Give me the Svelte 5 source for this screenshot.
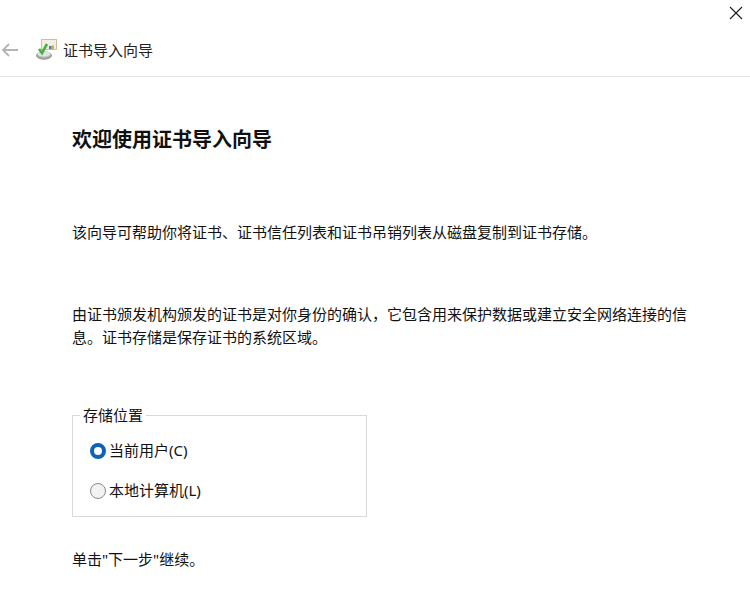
<script>
  // Wizard page copy
  const title = '证书导入向导'
  const heading = '欢迎使用证书导入向导'
  const intro = '该向导可帮助你将证书、证书信任列表和证书吊销列表从磁盘复制到证书存储。'
  const detail = '由证书颁发机构颁发的证书是对你身份的确认，它包含用来保护数据或建立安全网络连接的信息。证书存储是保存证书的系统区域。'

  let location = 'user'
</script>

<div class="wizard">
  <div class="close-row">
    <button class="close" aria-label="关闭">
      <svg width="14" height="14" viewBox="0 0 14 14">
        <path d="M1 1 L13 13 M13 1 L1 13" stroke="#1a1a1a" stroke-width="1.1" fill="none" />
      </svg>
    </button>
  </div>

  <header class="titlebar">
    <svg class="back" width="18" height="14" viewBox="0 0 18 14">
      <path d="M17 7 H2 M8 1 L2 7 L8 13" stroke="#b4b4b4" stroke-width="1.8" fill="none" />
    </svg>
    <svg class="wizard-icon" width="21" height="21" viewBox="0 0 21 21">
      <rect x="5.5" y="0.5" width="15" height="10" fill="#f4efe2" stroke="#c9bfa8" />
      <rect x="15.5" y="6.5" width="2.5" height="3.5" fill="#e8a53a" />
      <rect x="13" y="7" width="2.5" height="3" fill="#3f7fd0" />
      <ellipse cx="8" cy="16.5" rx="7.5" ry="3.8" fill="#a9ada9" stroke="#7f837f" stroke-width="0.7" />
      <ellipse cx="8" cy="15" rx="6.5" ry="2.8" fill="#e2e4e2" />
      <path d="M3 10 L6 14 L11 5" stroke="#4cb040" stroke-width="2.6" fill="none" />
    </svg>
    <span class="title">{title}</span>
  </header>

  <main class="content">
    <h1>{heading}</h1>
    <p class="intro">{intro}</p>
    <p class="detail">{detail}</p>

    <fieldset>
      <legend>存储位置</legend>
      <label class="option">
        <input type="radio" bind:group={location} value="user" />
        <span class="dot"></span>
        <span>当前用户(C)</span>
      </label>
      <label class="option">
        <input type="radio" bind:group={location} value="machine" />
        <span class="dot"></span>
        <span>本地计算机(L)</span>
      </label>
    </fieldset>

    <p class="next">单击"下一步"继续。</p>
  </main>
</div>

<style>
  :global(body) {
    background: #fff;
    overflow: hidden;
  }

  .wizard {
    width: 750px;
    height: 601px;
    overflow: hidden;
    background: #fff;
    color: #111;
    font-family: "Noto Sans", "Noto Sans CJK SC", sans-serif;
    font-size: 15px;
  }

  .close-row {
    display: flex;
    justify-content: flex-end;
    height: 26px;
  }

  .close {
    width: 40px;
    height: 26px;
    border: 0;
    padding: 0 0 0 12px;
    background: none;
    display: flex;
    align-items: center;
    justify-content: center;
    align-self: flex-start;
  }

  .titlebar {
    height: 51px;
    box-sizing: border-box;
    border-bottom: 1px solid #e2e2e2;
    display: flex;
    align-items: center;
    padding: 0 0 2px 1px;
  }

  .back {
    margin-right: 17px;
  }

  .wizard-icon {
    margin-right: 6px;
    margin-top: -2px;
    filter: blur(0.4px);
  }

  .title {
    font-size: 15px;
    color: #222;
    margin-top: -2px;
  }

  .content {
    padding: 49px 60px 0 72px;
  }

  h1 {
    margin: 0;
    font-size: 20px;
    font-weight: 700;
    line-height: 28px;
    color: #111;
  }

  p {
    margin: 0;
    line-height: 23px;
  }

  .intro {
    margin-top: 67px;
  }

  .detail {
    margin-top: 59px;
  }

  fieldset {
    width: 295px;
    height: 112px;
    box-sizing: border-box;
    margin: 0;
    margin-top: 56px;
    padding: 13px 0 0 17px;
    border: 1px solid #d9d9d9;
    display: flex;
    flex-direction: column;
    gap: 18px;
  }

  legend {
    padding: 0 3px;
    margin-left: -10px;
    line-height: 20px;
  }

  .option {
    display: flex;
    align-items: center;
    gap: 3px;
    height: 22px;
  }

  .option input {
    position: absolute;
    opacity: 0;
    width: 0;
    height: 0;
  }

  .dot {
    width: 16px;
    height: 16px;
    box-sizing: border-box;
    margin-top: 4px;
    border-radius: 50%;
    border: 1.5px solid #8a8a8a;
    background: #f2f2f2;
  }

  .option input:checked + .dot {
    border: 4.5px solid #0f62b5;
    background: #fff;
  }

  .next {
    margin-top: 31px;
  }
</style>
